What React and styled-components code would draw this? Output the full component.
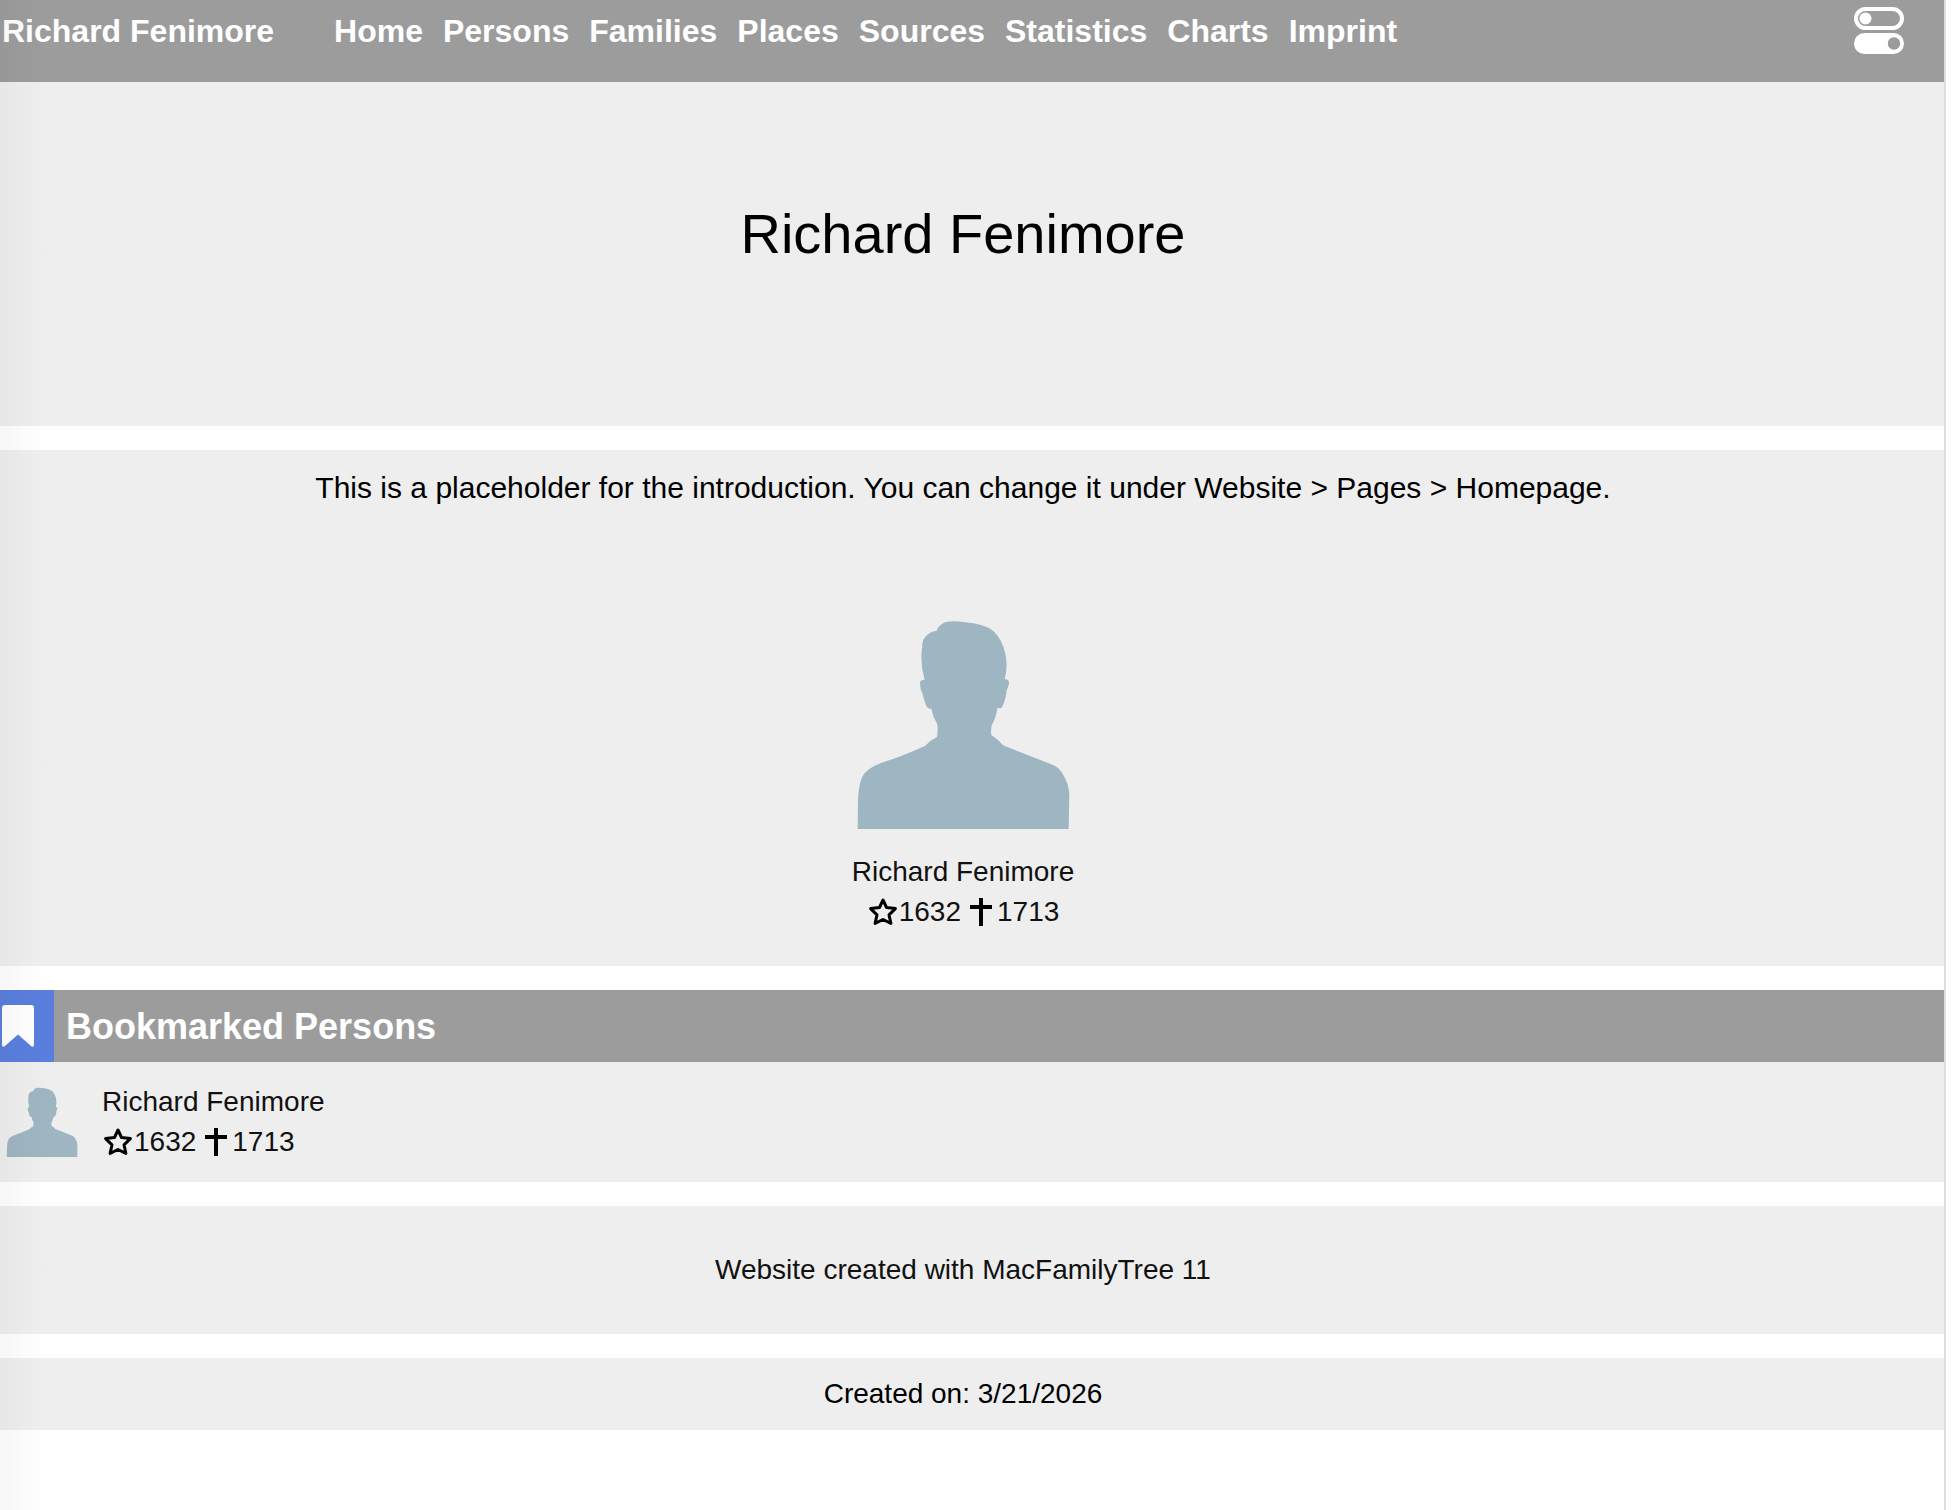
import React from "react";
import styled, { createGlobalStyle } from "styled-components";

const GlobalStyle = createGlobalStyle`
  * {
    box-sizing: border-box;
  }

  body {
    margin: 0;
    background: #fff;
    color: #000;
    font-family: "Liberation Sans", Arial, Helvetica, sans-serif;
    font-size: 28px;
    line-height: 40px;
  }
`;

const Page = styled.div`
  position: relative;
  min-height: 100vh;
  margin-right: 10px;
  border-right: 2px solid #ddd;
`;

const EdgeShade = styled.div`
  position: absolute;
  top: 0;
  bottom: 0;
  left: 0;
  width: 50px;
  background: linear-gradient(
    to right,
    rgba(0, 0, 0, 0.03),
    rgba(0, 0, 0, 0.01) 50%,
    rgba(0, 0, 0, 0)
  );
  pointer-events: none;
`;

const Header = styled.header`
  display: flex;
  align-items: center;
  height: 82px;
  padding: 0 40px 20px 2px;
  background: #9c9c9c;
  font-size: 32px;
  font-weight: bold;
`;

const HeaderLink = styled.a`
  color: #fff;
  text-decoration: none;
`;

const Nav = styled.nav`
  display: flex;
  flex: 1;
  gap: 20px;
  margin-left: 60px;
`;

const SwitchButton = styled.button`
  display: flex;
  padding: 0;
  border: 0;
  background: none;
  color: #fff;
  cursor: pointer;
`;

const Main = styled.main`
  display: flex;
  flex-direction: column;
  gap: 24px;
`;

const Panel = styled.section`
  padding: ${(props) => props.$pad} 18px ${(props) => props.$padBottom || props.$pad} 0;
  background: #eee;
  text-align: center;
`;

const Title = styled.h1`
  margin: 0;
  font-size: 56px;
  font-weight: normal;
  line-height: 64px;
`;

const Intro = styled.p`
  margin: 0 0 96px;
  font-size: 30px;
`;

const PersonLink = styled.a`
  display: ${(props) => (props.$row ? "flex" : "inline-flex")};
  flex-direction: ${(props) => (props.$row ? "row" : "column")};
  align-items: center;
  gap: ${(props) => (props.$row ? "20px" : "8px")};
  color: #111;
  text-decoration: none;
`;

const CreditLink = styled.a`
  color: #111;
  text-decoration: none;
`;

const Dates = styled.span`
  display: flex;
  align-items: center;
  justify-content: ${(props) => (props.$row ? "flex-start" : "center")};
`;

const Name = styled.span`
  display: block;
`;

const DateIcon = styled.svg`
  height: 30px;
  color: #000;
`;

const Year = styled.span`
  margin-right: 6px;

  &:last-child {
    margin-right: 0;
  }
`;

const BookmarkHeader = styled.div`
  display: flex;
  height: 72px;
  background: #9c9c9c;
`;

const BookmarkBadge = styled.div`
  display: flex;
  align-items: center;
  width: 54px;
  padding-left: 2px;
  background: #597edd;
`;

const BookmarkTitle = styled.h2`
  margin: 0;
  padding-left: 12px;
  color: #fff;
  font-size: 36px;
  line-height: 74px;
`;

const BookmarkList = styled.div`
  padding: 20px 2px;
  background: #eee;
`;

const links = [
  "Home",
  "Persons",
  "Families",
  "Places",
  "Sources",
  "Statistics",
  "Charts",
  "Imprint",
];

const Avatar = ({ size }) => (
  <svg width={size} height={size} viewBox="10 12 720 720" aria-hidden="true">
    <path
      fill="#9eb5c2"
      d="M54 687 L55 600 Q57 552 68 530 Q80 505 126 488 Q180 472 256 438 Q272 420 292 411 Q295 392 293 373 Q280 352 275 326 Q264 328 259 316 Q254 304 249 283 Q240 266 241 247 Q244 238 255 239 Q240 190 248 137 Q246 122 257 110 Q270 95 291 92 Q298 74 316 67 Q340 60 376 67 Q430 70 461 93 Q486 116 496 157 Q506 196 495 238 Q509 236 508 252 Q500 270 498 290 Q494 310 486 323 Q480 326 473 324 Q470 352 456 376 Q453 392 455 405 Q476 418 490 436 L638 494 Q656 501 666 517 Q688 550 689 586 L687 687 Z"
    />
  </svg>
);

const Star = () => (
  <DateIcon width="32" viewBox="-1 0 32 30" aria-hidden="true">
    <path
      fill="none"
      stroke="currentColor"
      strokeWidth="3"
      strokeLinejoin="round"
      d="M15 3 L18.5 10.5 L27.4 11.6 L21 17.8 L22.9 26.4 L15 22.5 L7.1 26.4 L9 17.8 L2.6 11.6 L11.5 10.5 Z"
    />
  </DateIcon>
);

const Cross = () => (
  <DateIcon width="30" viewBox="0 0 30 30" aria-hidden="true">
    <path fill="currentColor" d="M12 1h4v7h9v4h-9v17h-4V12H3V8h9z" />
  </DateIcon>
);

const SwitchIcon = () => (
  <svg width="50" height="50" viewBox="0 -1 50 50" aria-hidden="true">
    <rect
      x="2"
      y="2"
      width="46"
      height="19"
      rx="9.5"
      fill="none"
      stroke="currentColor"
      strokeWidth="4"
    />
    <circle cx="11.5" cy="11.5" r="6" fill="currentColor" />
    <path
      fill="currentColor"
      fillRule="evenodd"
      d="M10.5 26h29a10.5 10.5 0 0 1 0 21h-29a10.5 10.5 0 0 1 0-21zM40 30.3a6.2 6.2 0 1 0 0 12.4a6.2 6.2 0 0 0 0-12.4z"
    />
  </svg>
);

const Person = ({ row }) => (
  <PersonLink href="#person" $row={row}>
    <Avatar size={row ? 80 : 240} />
    <span>
      <Name>Richard Fenimore</Name>
      <Dates $row={row}>
        <Star />
        <Year>1632</Year>
        <Cross />
        <Year>1713</Year>
      </Dates>
    </span>
  </PersonLink>
);

const App = () => (
  <Page>
    <GlobalStyle />
    <Header>
      <HeaderLink href="#top">Richard Fenimore</HeaderLink>
      <Nav>
        {links.map((link) => (
          <HeaderLink key={link} href={`#${link.toLowerCase()}`}>
            {link}
          </HeaderLink>
        ))}
      </Nav>
      <SwitchButton type="button" aria-label="Toggle appearance">
        <SwitchIcon />
      </SwitchButton>
    </Header>
    <Main>
      <Panel $pad="120px" $padBottom="160px">
        <Title>Richard Fenimore</Title>
      </Panel>
      <Panel $pad="18px" $padBottom="34px">
        <Intro>
          This is a placeholder for the introduction. You can change it under
          Website &gt; Pages &gt; Homepage.
        </Intro>
        <Person />
      </Panel>
      <section>
        <BookmarkHeader>
          <BookmarkBadge>
            <svg width="32" height="42" viewBox="0 0 32 42" aria-hidden="true">
              <path
                fill="#fff"
                d="M3 0h26q3 0 3 3v36.5q0 3.5-3 1.5L16 29.500L3 41q-3 2-3-1.500V3q0-3 3-3z"
              />
            </svg>
          </BookmarkBadge>
          <BookmarkTitle>Bookmarked Persons</BookmarkTitle>
        </BookmarkHeader>
        <BookmarkList>
          <Person row />
        </BookmarkList>
      </section>
      <Panel $pad="44px">
        <CreditLink href="#credit">
          Website created with MacFamilyTree 11
        </CreditLink>
      </Panel>
      <Panel $pad="16px">Created on: 3/21/2026</Panel>
    </Main>
    <EdgeShade />
  </Page>
);

export default App;
